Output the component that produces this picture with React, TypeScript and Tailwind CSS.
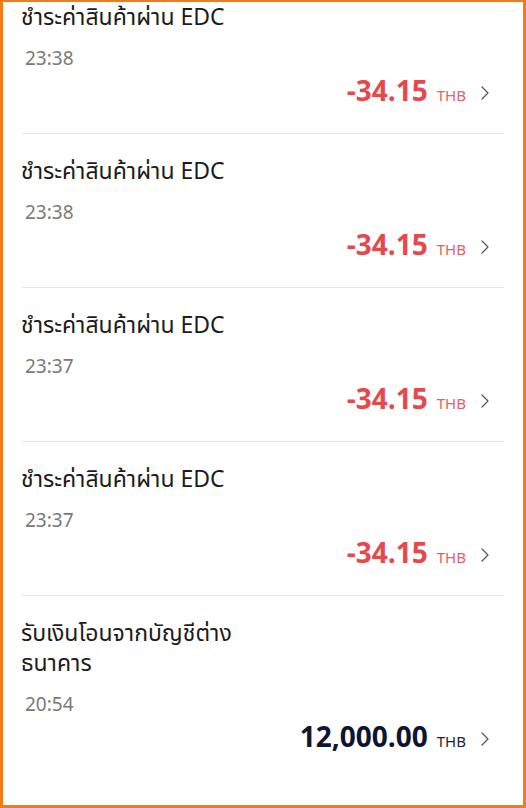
import React from 'react';
import { ChevronRight } from 'lucide-react';

interface TxProps {
  title: string[];
  time: string;
  amount: string;
  negative?: boolean;
  first?: boolean;
  last?: boolean;
}

const Tx: React.FC<TxProps> = ({ title, time, amount, negative, first, last }) => (
  <div
    className={`mx-[19px] pt-[23px] pb-[24px] ${last ? '' : 'border-b border-[#e4e7ec]'} ${first ? '-mt-[22px]' : ''}`}
  >
    <div className="-ml-px whitespace-pre-line text-[23px] leading-[30px] text-[#1c1c1c]">
      {title.join('\n')}
    </div>
    <div className="mt-[15px] pl-[3px] text-[19px] leading-[24px] text-[#7a7a7a]">{time}</div>
    <div className="mt-[5px] flex h-[32px] items-center justify-end pr-[7px]">
      <span
        className={`text-[28px] font-bold leading-[32px] ${negative ? 'text-[#e5484d]' : 'text-[#0f1530]'}`}
      >
        {amount}
      </span>
      <span
        className={`ml-[9px] mt-[8px] text-[15px] leading-[20px] ${negative ? 'text-[#e36166]' : 'text-[#1f2437]'}`}
      >
        THB
      </span>
      <ChevronRight className="ml-[7px] h-[24px] w-[24px] text-[#555]" strokeWidth={1.2} />
    </div>
  </div>
);

export default function App() {
  const items: TxProps[] = [
    { title: ['ชำระค่าสินค้าผ่าน EDC'], time: '23:38', amount: '-34.15', negative: true, first: true },
    { title: ['ชำระค่าสินค้าผ่าน EDC'], time: '23:38', amount: '-34.15', negative: true },
    { title: ['ชำระค่าสินค้าผ่าน EDC'], time: '23:37', amount: '-34.15', negative: true },
    { title: ['ชำระค่าสินค้าผ่าน EDC'], time: '23:37', amount: '-34.15', negative: true },
    { title: ['รับเงินโอนจากบัญชีต่าง', 'ธนาคาร'], time: '20:54', amount: '12,000.00', last: true },
  ];

  return (
    <div
      className="h-[808px] w-[526px] overflow-hidden border-[3px] border-t-2 border-[#f47b16] bg-white"
      style={{ fontFamily: '"Noto Sans Thai", "Noto Sans", "DejaVu Sans", sans-serif' }}
    >
      {items.map((it, i) => (
        <Tx key={i} {...it} />
      ))}
    </div>
  );
}
